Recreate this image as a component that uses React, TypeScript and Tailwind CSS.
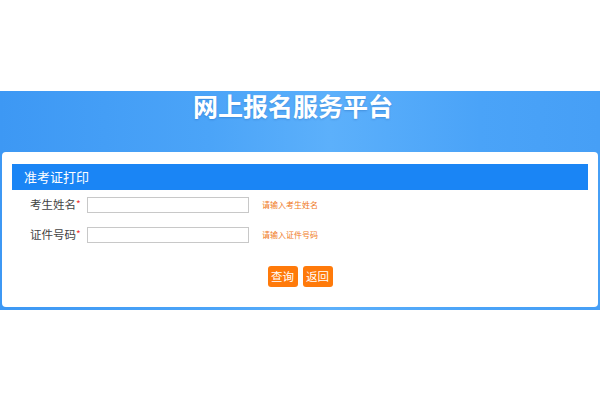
import React from "react"

const cjk = "font-['Microsoft_YaHei','Noto_Sans_CJK_SC',sans-serif]"

function Row({ label, hint }: { label: string; hint: string }) {
  return (
    <div className="flex items-center h-[16px] pl-[18px]">
      <span className="text-[11.5px] text-[#444] leading-none w-[57px]">
        {label}
        <span className="text-[#e33] text-[10px] align-top">*</span>
      </span>
      <div className="w-[162px] h-[16px] border border-[#c8c8c8] bg-white" />
      <span className="ml-[13px] text-[8px] text-[#f07a24] leading-none">{hint}</span>
    </div>
  )
}

export default function App() {
  return (
    <div className={`w-[600px] h-[400px] bg-white ${cjk}`}>
      <div className="h-[91px]" />
      <section className="bg-[linear-gradient(90deg,#3d98f4_0%,#4ba4f8_35%,#5cb0fb_55%,#4aa3f8_80%,#469ff6_100%)] px-[2px] pb-[3px]">
        <h1 className="h-[61px] text-center pr-[14px] text-[25px] leading-[28px] font-bold text-white [text-shadow:0_1px_2px_rgba(0,60,140,0.25)]">
          网上报名服务平台
        </h1>
        <div className="bg-white rounded-[4px] pt-[12px] px-[10px] pb-[20px]">
          <div className="h-[26px] bg-[#1a85f5] flex items-center pl-[12px] text-white text-[13px]">
            准考证打印
          </div>
          <div className="flex flex-col gap-[14px] mt-[7px]">
            <Row label="考生姓名" hint="请输入考生姓名" />
            <Row label="证件号码" hint="请输入证件号码" />
          </div>
          <div className="flex justify-center gap-[5px] mt-[23px]">
            <button className="w-[30px] h-[21px] rounded-[3px] bg-[#ff7a0a] text-white text-[11.5px] leading-none">
              查询
            </button>
            <button className="w-[30px] h-[21px] rounded-[3px] bg-[#ff7a0a] text-white text-[11.5px] leading-none">
              返回
            </button>
          </div>
        </div>
      </section>
    </div>
  )
}
